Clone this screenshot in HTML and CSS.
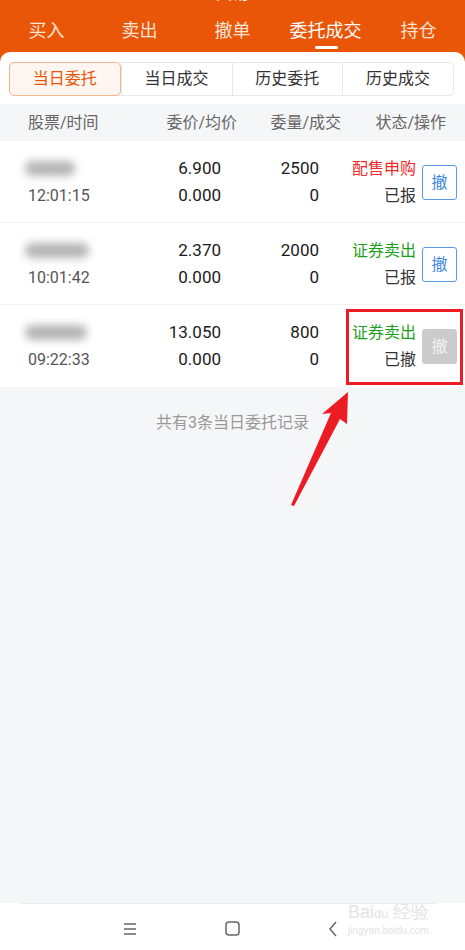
FILE: index.html
```html
<!DOCTYPE html>
<html>
<head>
    <meta charset="utf-8">
    <title>委托成交</title>
    <link rel="stylesheet" href="styles.css">
</head>
<body>

<div class="top">
    <div class="title">交易</div>
    <div class="tabs">
        <span class="tab">买入</span>
        <span class="tab">卖出</span>
        <span class="tab">撤单</span>
        <span class="tab active">委托成交</span>
        <span class="tab">持仓</span>
    </div>
</div>

<div class="card">
    <div class="seg">
        <span class="seg-item on">当日委托</span>
        <span class="seg-item">当日成交</span>
        <span class="seg-item">历史委托</span>
        <span class="seg-item">历史成交</span>
    </div>

    <div class="thead">
        <span>股票/时间</span>
        <span class="r">委价/均价</span>
        <span class="r">委量/成交</span>
        <span class="r">状态/操作</span>
    </div>

    <div class="row">
        <div class="cell">
            <div class="name"><i class="blur" style="width:50px"></i></div>
            <div class="time">12:01:15</div>
        </div>
        <div class="cell r num"><div>6.900</div><div>0.000</div></div>
        <div class="cell r num"><div>2500</div><div>0</div></div>
        <div class="cell r">
            <div class="red">配售申购</div>
            <div class="st">已报</div>
        </div>
        <button class="btn">撤</button>
    </div>

    <div class="row">
        <div class="cell">
            <div class="name"><i class="blur" style="width:64px"></i></div>
            <div class="time">10:01:42</div>
        </div>
        <div class="cell r num"><div>2.370</div><div>0.000</div></div>
        <div class="cell r num"><div>2000</div><div>0</div></div>
        <div class="cell r">
            <div class="green">证券卖出</div>
            <div class="st">已报</div>
        </div>
        <button class="btn">撤</button>
    </div>

    <div class="row last">
        <div class="cell">
            <div class="name"><i class="blur" style="width:62px"></i></div>
            <div class="time">09:22:33</div>
        </div>
        <div class="cell r num"><div>13.050</div><div>0.000</div></div>
        <div class="cell r num"><div>800</div><div>0</div></div>
        <div class="cell r">
            <div class="green">证券卖出</div>
            <div class="st">已撤</div>
        </div>
        <button class="btn off">撤</button>
    </div>

    <div class="empty">
        <p class="total">共有3条当日委托记录</p>
    </div>
</div>

<div class="nav">
    <svg width="14" height="14" viewBox="0 0 14 14"><path d="M1 2h12M1 7h12M1 12h12" stroke="#666" stroke-width="1.4" fill="none"/></svg>
    <svg width="15" height="15" viewBox="0 0 15 15"><rect x="1" y="1" width="13" height="13" rx="3" stroke="#666" stroke-width="1.5" fill="none"/></svg>
    <svg width="10" height="16" viewBox="0 0 10 16"><path d="M8 1L2 8l6 7" stroke="#666" stroke-width="1.5" fill="none"/></svg>
</div>

<!-- 标注 -->
<div class="mark"></div>
<svg class="arrow" width="465" height="950" viewBox="0 0 465 950">
    <polygon points="348,392 347,424 340,419 294,506 291,505 331,413 322,414" fill="#ED1C24"/>
</svg>
<div class="wm">Bai<b>du</b> 经验<small>jingyan.baidu.com</small></div>

</body>
</html>
```

FILE: styles.css
```css
body {
    font-family: "Roboto", "Noto Sans CJK SC", sans-serif;
    margin: 0;
    width: 465px;
    height: 950px;
    background-color: #F5F6F8;
    color: #1A1A1A;
    position: relative;
    overflow: hidden;
}

.top {
    display: flow-root;
    background-color: #E95608;
    height: 62px;
    color: #FFF;
}

.title {
    text-align: center;
    font-size: 17px;
    line-height: 20px;
    height: 20px;
    margin-top: -17px;
}

.tabs {
    display: grid;
    grid-template-columns: repeat(5, 1fr);
    margin-top: 11px;
    font-size: 18px;
    line-height: 34px;
    color: #FBE3D6;
}

.tab {
    text-align: center;
    position: relative;
}

.tab.active {
    color: #FFF;
}

.tab.active:after {
    content: "";
    position: absolute;
    left: 50%;
    margin-left: -11px;
    top: 32px;
    width: 23px;
    height: 3px;
    border-radius: 2px;
    background: #FFF;
}

.card {
    background-color: #FFF;
    margin-top: -10px;
    border-radius: 10px 10px 0 0;
    padding-top: 10px;
}

.seg {
    display: grid;
    grid-template-columns: repeat(4, 1fr);
    margin: 0 11px 8px 9px;
    border: 1px solid #E8E8E8;
    border-radius: 5px;
    font-size: 16px;
    line-height: 32px;
    text-align: center;
    color: #333;
}

.seg-item {
    border-left: 1px solid #E8E8E8;
}

.seg-item:first-child {
    border-left: none;
}

.seg-item.on {
    color: #E95608;
    background: #FFF6F1;
    border: 1px solid #F7B48E;
    border-radius: 5px;
    margin: -1px 0 -1px -1px;
}

.thead {
    display: grid;
    grid-template-columns: 1fr 104px 104px 105px;
    padding: 0 19px 0 28px;
    background: #F5F6F8;
    font-size: 16px;
    line-height: 37px;
    color: #666;
}

.r {
    text-align: right;
}

.row {
    display: grid;
    grid-template-columns: 1fr 81px 98px 97px 41px;
    align-items: center;
    padding: 14px 8px 13px 28px;
    border-bottom: 1px solid #F1F1F1;
    font-size: 16px;
    line-height: 27px;
    background: #FFF;
}

.row.last {
    border-bottom: none;
    padding-bottom: 14px;
}

.num {
    font-size: 17px;
}

.name {
    height: 27px;
    display: flex;
    align-items: center;
}

.blur {
    display: block;
    height: 15px;
    margin-left: -3px;
    background: #B4B4B4;
    border-radius: 7px;
    filter: blur(4px);
}

.time {
    color: #555;
}

.red {
    color: #F02A2A;
}

.green {
    color: #1DA01D;
}

.st {
    color: #333;
}

.btn {
    margin-left: 6px;
    width: 35px;
    height: 35px;
    padding: 0;
    font: inherit;
    font-size: 16px;
    color: #3F88E0;
    background: #FFF;
    border: 1px solid #5A9BE8;
    border-radius: 3px;
    box-sizing: border-box;
}

.btn.off {
    color: #F2F2F2;
    background: #CBCBCB;
    border-color: #CBCBCB;
}

.empty {
    background: #F5F6F8;
    height: 515px;
    padding-top: 1px;
}

.total {
    margin: 23px 0 0;
    text-align: center;
    font-size: 16px;
    line-height: 24px;
    color: #999;
}

.nav {
    border-top: 1px solid #ECECEC;
    margin: 0 27px 0 22px;
    background: #FFF;
    height: 49px;
    display: flex;
    align-items: center;
    justify-content: center;
    gap: 88px;
    box-shadow: -22px 0 0 #FFF, 27px 0 0 #FFF;
}

.mark {
    position: absolute;
    left: 346px;
    top: 309px;
    width: 111px;
    height: 70px;
    border: 3px solid #ED1C24;
}

.arrow {
    position: absolute;
    left: 0;
    top: 0;
}

.wm {
    position: absolute;
    left: 348px;
    top: 903px;
    font-family: "Liberation Sans", sans-serif;
    font-size: 18px;
    color: #E4E4E4;
    line-height: 18px;
}

.wm b {
    font-weight: normal;
    font-size: 13px;
}

.wm small {
    display: block;
    font-size: 10px;
    line-height: 16px;
}
```
